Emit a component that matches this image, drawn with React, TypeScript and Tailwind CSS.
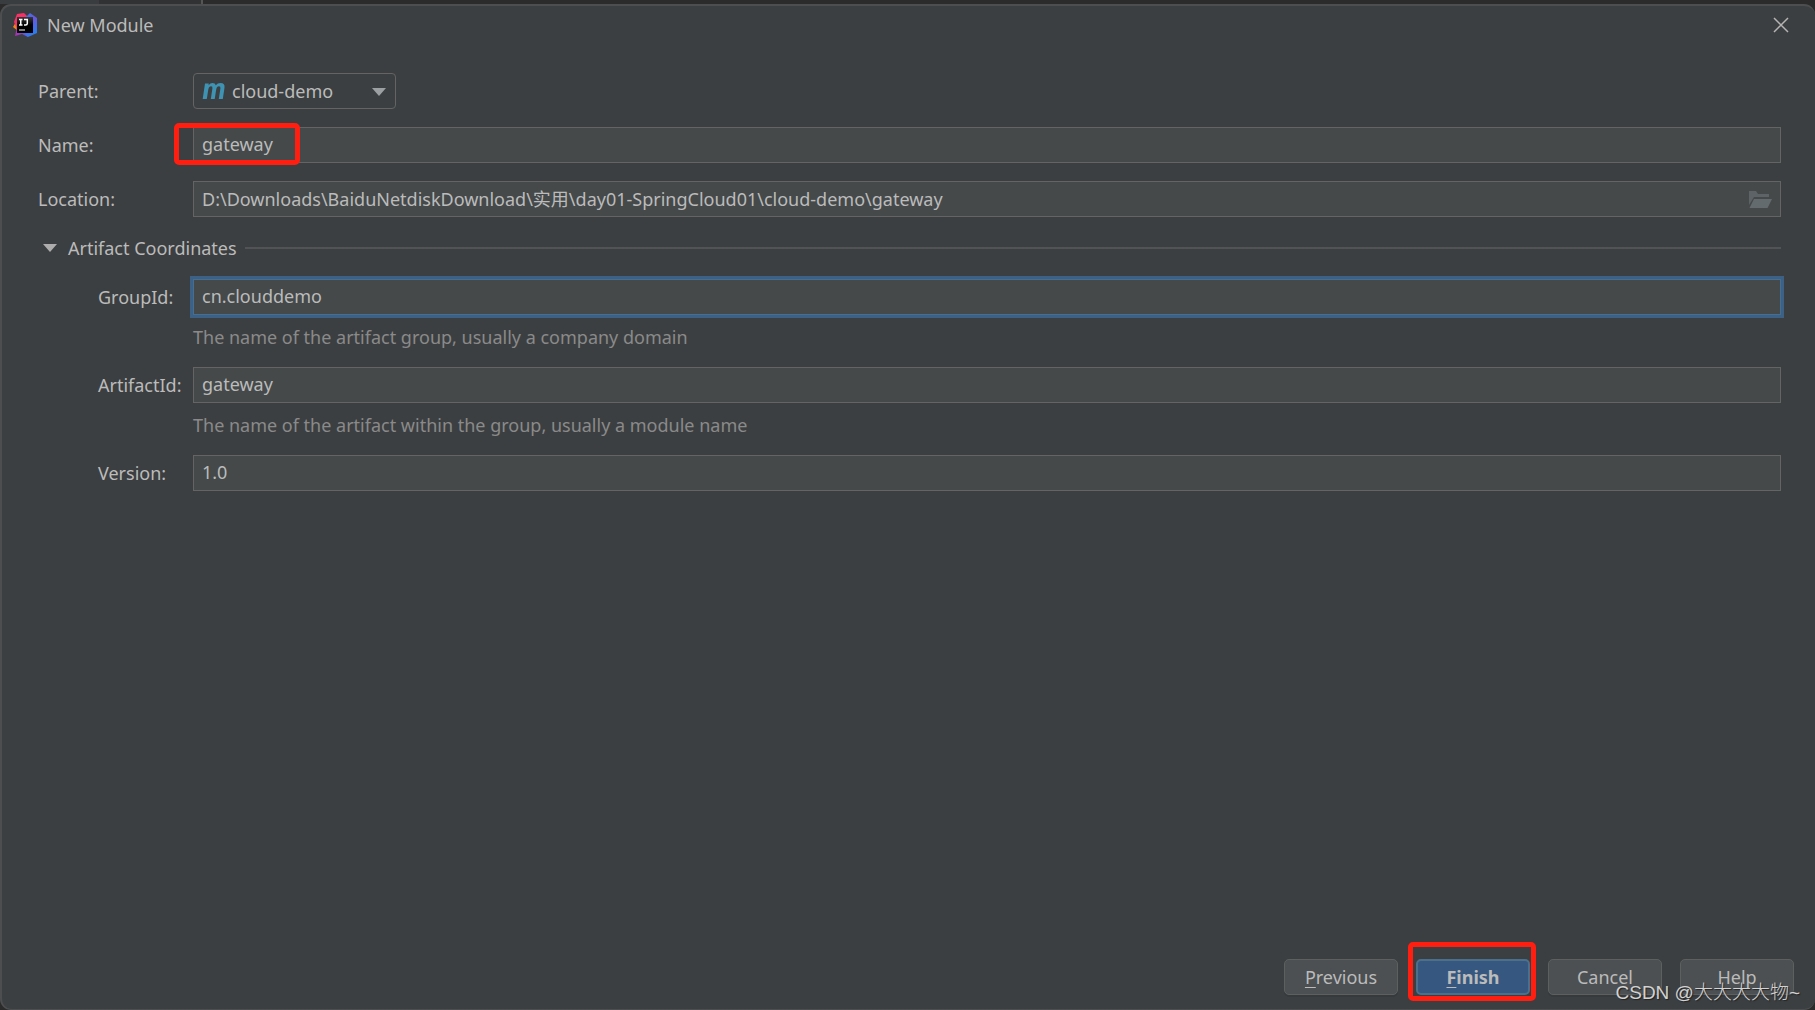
import type { ReactNode } from 'react';

function AppLogo() {
  return (
    <svg viewBox="0 0 24 24" className="h-6 w-6 shrink-0" aria-hidden="true">
      <defs>
        <linearGradient id="pink" x1="0" y1="0" x2="1" y2="1">
          <stop offset="0" stopColor="#fe315d" />
          <stop offset="1" stopColor="#f02f7c" />
        </linearGradient>
        <linearGradient id="blue" x1="0" y1="0" x2="0.5" y2="1">
          <stop offset="0" stopColor="#2f7bea" />
          <stop offset="0.5" stopColor="#6a57e0" />
          <stop offset="1" stopColor="#2a7cf0" />
        </linearGradient>
        <linearGradient id="violet" x1="0" y1="0" x2="1" y2="0">
          <stop offset="0" stopColor="#b32fb4" />
          <stop offset="1" stopColor="#5a56e6" />
        </linearGradient>
        <linearGradient id="face" x1="0" y1="0" x2="0" y2="1">
          <stop offset="0" stopColor="#3a3a3c" />
          <stop offset="0.5" stopColor="#000" />
        </linearGradient>
      </defs>
      <path d="M0 14 L3 9 L7 13 L5 18 Z" fill="#f98316" />
      <path d="M4 1 L11 0 L14 3 L14 10 L4 16 L1 9 Z" fill="url(#pink)" />
      <path d="M2 23 L4 14 L14 14 L15 24 L9 21 Z" fill="url(#violet)" />
      <path d="M13 4 L17 0 L24 5 L24 20 L15 24 L10 20 Z" fill="url(#blue)" />
      <rect x="4" y="4" width="16" height="16" fill="url(#face)" />
      <path d="M6 6.500H9.500M7.750 6.500V12M6 12H9.500M11 6.500H14.300V10.500Q14.300 12 12.500 12H11" fill="none" stroke="#fff" strokeWidth="1.500" />
      <path d="M6 17H12" stroke="#d0d0d0" strokeWidth="1.200" />
    </svg>
  );
}

function MavenIcon() {
  return (
    <svg viewBox="0 0 24 18" className="pointer-events-none absolute left-[9px] top-[9px] h-[18px] w-6" aria-hidden="true">
      <path
        d="M3 1.500H6.800L6.500 3.300Q8.300 1 10.500 1Q13.200 1 13.800 3.300Q15.600 1 18.400 1Q23.200 1 22.500 5.800L20.800 17H16.800L18.400 6.400Q18.700 4.200 17 4.200Q14.800 4.200 14.200 7.400L12.700 17H8.800L10.400 6.400Q10.700 4.200 9.100 4.200Q6.900 4.200 6.300 7.400L4.800 17H0.700Z"
        fill="#3e92b2"
      />
    </svg>
  );
}

function FolderIcon() {
  return (
    <svg viewBox="0 0 23 17" className="h-[17px] w-[23px]" aria-hidden="true">
      <path d="M0 14V0H7L9 3H20V6H5Z" fill="#5d6366" />
      <path d="M5 8H23L18.500 17H0.500Z" fill="#646b6f" />
    </svg>
  );
}

type FieldProps = {
  id: string;
  label: string;
  value: string;
  nested?: boolean;
  focused?: boolean;
  marked?: boolean;
  trailing?: ReactNode;
};

function Field({ id, label, value, nested, focused, marked, trailing }: FieldProps) {
  return (
    <div className={nested ? 'grid grid-cols-[95px_1fr] items-center' : 'grid grid-cols-[155px_1fr] items-center'}>
      <label htmlFor={id}>{label}</label>
      <div className="relative">
        <input
          id={id}
          defaultValue={value}
          spellCheck={false}
          className={
            focused
              ? 'block h-9 w-full border border-[#466d94] bg-[#45494a] px-2 pb-[2px] outline-3 outline-[#3d6185]'
              : 'block h-9 w-full border border-[#646464] bg-[#45494a] px-2 pb-[2px] outline-none'
          }
        />
        {trailing}
        {marked && (
          <span className="pointer-events-none absolute -left-[19px] -top-1 h-[42px] w-[126px] rounded-[5px] border-5 border-[#ff1e10]" />
        )}
      </div>
    </div>
  );
}

function Hint({ children }: { children: ReactNode }) {
  return <p className="mb-[18px] ml-[95px] mt-[10px] leading-6 text-[#8a8a8a]">{children}</p>;
}

const plainButton =
  'flex h-9 w-[114px] items-center justify-center rounded-[5px] border border-[#5e6060] bg-[#4c5052] shadow-[0_2px_0_#373a3c]';

export default function App() {
  return (
    <div className="flex min-h-screen flex-col bg-[#2b2b2b] font-['Noto_Sans','Noto_Sans_CJK_SC',sans-serif] text-[18px] leading-6 text-[#bbbbbb]">
      <div className="flex h-1 shrink-0">
        <div className="w-[99px] bg-[#3a3d3f]" />
        <div className="w-[102px] bg-[#303234]" />
        <div className="w-[2px] bg-[#555]" />
      </div>
      <div className="relative flex flex-1 flex-col rounded-[11px] border-2 border-b border-r-0 border-[#4c4e50] bg-[#3c3f41]">
        <header className="flex h-[38px] items-center pl-[11px] pr-[22px]">
          <AppLogo />
          <h1 className="ml-[10px] flex-1">New Module</h1>
          <button type="button" aria-label="Close" className="flex h-6 w-6 items-center justify-center">
            <svg viewBox="0 0 16 16" className="h-4 w-4" aria-hidden="true">
              <path d="M1 1L15 15M15 1L1 15" stroke="#b4b4b2" strokeWidth="1.500" fill="none" />
            </svg>
          </button>
        </header>

        <form className="flex flex-1 flex-col" onSubmit={(e) => e.preventDefault()}>
          <div className="flex-1 pl-9 pr-[34px] pt-[29px]">
            <div className="flex flex-col gap-[18px]">
              <div className="grid grid-cols-[155px_1fr] items-center">
                <label htmlFor="parent">Parent:</label>
                <div className="relative h-9 w-[203px]">
                  <select
                    id="parent"
                    className="h-9 w-full appearance-none rounded-[4px] border border-[#646464] bg-[#3c3f41] pl-[38px] outline-none"
                  >
                    <option>cloud-demo</option>
                  </select>
                  <MavenIcon />
                  <svg viewBox="0 0 14 8" className="pointer-events-none absolute right-[10px] top-[15px] h-2 w-[14px]" aria-hidden="true">
                    <path d="M0 0H14L7 8Z" fill="#9da0a2" />
                  </svg>
                </div>
              </div>
              <Field id="name" label="Name:" value="gateway" marked />
              <Field
                id="location"
                label="Location:"
                value={'D:\\Downloads\\BaiduNetdiskDownload\\实用\\day01-SpringCloud01\\cloud-demo\\gateway'}
                trailing={
                  <button type="button" aria-label="Browse" className="absolute right-[9px] top-[10px]">
                    <FolderIcon />
                  </button>
                }
              />
            </div>

            <div className="flex h-[62px] items-center pl-[5px]">
              <button type="button" aria-expanded="true" className="flex items-center">
                <svg viewBox="0 0 14 8" className="mr-[11px] h-2 w-[14px]" aria-hidden="true">
                  <path d="M0 0H14L7 8Z" fill="#adadad" />
                </svg>
                Artifact Coordinates
              </button>
              <div className="ml-2 h-[2px] flex-1 bg-[#515354]" />
            </div>

            <div className="pl-[60px]">
              <Field id="group" label="GroupId:" value="cn.clouddemo" nested focused />
              <Hint>The name of the artifact group, usually a company domain</Hint>
              <Field id="artifact" label="ArtifactId:" value="gateway" nested />
              <Hint>The name of the artifact within the group, usually a module name</Hint>
              <Field id="version" label="Version:" value="1.0" nested />
            </div>
          </div>

          <footer className="flex justify-end gap-[18px] pb-[14px] pr-[21px]">
            <button type="button" className={plainButton}>
              <span>
                <u className="underline-offset-3">P</u>revious
              </span>
            </button>
            <div className="relative">
              <button
                type="submit"
                className="flex h-9 w-[114px] items-center justify-center rounded-[5px] border-2 border-[#4c708c] bg-[#365880] font-bold"
              >
                <span>
                  <u className="decoration-1 underline-offset-3">F</u>inish
                </span>
              </button>
              <span className="pointer-events-none absolute -left-2 -top-[17px] h-[59px] w-32 rounded-[5px] border-5 border-[#ff1e10]" />
            </div>
            <button type="button" className={plainButton}>
              Cancel
            </button>
            <button type="button" className={plainButton}>
              Help
            </button>
          </footer>
        </form>

        <p className="pointer-events-none absolute bottom-1 right-[15px] font-['Liberation_Sans','Noto_Sans_CJK_SC',sans-serif] text-[19px] font-light text-[#d2d2d2] [text-shadow:1px_1px_1px_#222]">
          CSDN @大大大大物~
        </p>
      </div>
    </div>
  );
}
